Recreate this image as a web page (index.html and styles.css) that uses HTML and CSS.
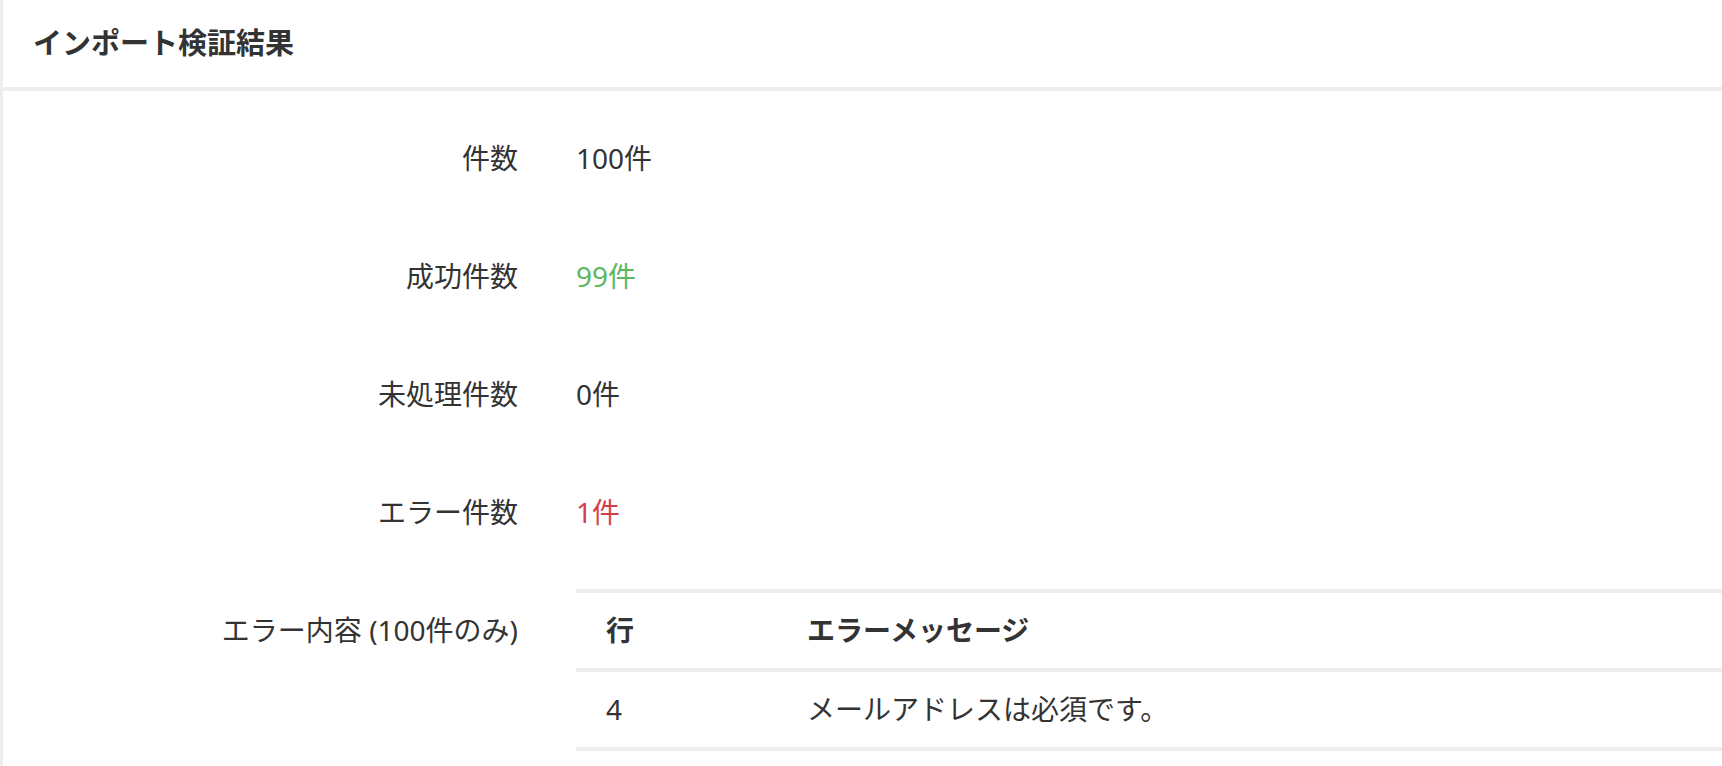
FILE: index.html
```html
<!DOCTYPE html>
<html lang="ja">
  <head>
    <meta charset="UTF-8" />
    <title>インポート検証結果</title>
    <link rel="stylesheet" href="styles.css">
  </head>
  <body>
    <!-- 検証結果パネル -->
    <div class="panel">
      <div class="panel-heading">
        <h3 class="panel-title">インポート検証結果</h3>
      </div>
      <div class="panel-body">
        <dl class="result">
          <div class="result-row">
            <dt>件数</dt>
            <dd>100件</dd>
          </div>
          <div class="result-row">
            <dt>成功件数</dt>
            <dd class="text-success">99件</dd>
          </div>
          <div class="result-row">
            <dt>未処理件数</dt>
            <dd>0件</dd>
          </div>
          <div class="result-row">
            <dt>エラー件数</dt>
            <dd class="text-danger">1件</dd>
          </div>
          <div class="result-row result-row-table">
            <dt>エラー内容 (100件のみ)</dt>
            <dd>
              <table class="error-table">
                <thead>
                  <tr>
                    <th class="col-line">行</th>
                    <th>エラーメッセージ</th>
                  </tr>
                </thead>
                <tbody>
                  <tr>
                    <td>4</td>
                    <td>メールアドレスは必須です。</td>
                  </tr>
                </tbody>
              </table>
            </dd>
          </div>
        </dl>
      </div>
    </div>
  </body>
</html>
```

FILE: styles.css
```css
/* インポート検証結果 */
body {
  margin: 0;
  font-family: "Noto Sans", "Noto Sans CJK JP", sans-serif;
  font-size: 28px;
  line-height: 42px;
  color: #333;
  background: #fff;
}
.panel {
  border-left: 3px solid #eee;
  min-height: 100vh;
  box-sizing: border-box;
}
.panel-heading {
  padding: 22px 30px 23px;
  border-bottom: 4px solid #eee;
}
.panel-title {
  margin: 0;
  font-size: 29px;
  line-height: 42px;
  font-weight: bold;
}
.panel-body {
  padding-top: 26px;
}
.result {
  margin: 0;
}
.result-row {
  display: flex;
  margin-bottom: 56px;
}
.result dt {
  flex: none;
  width: 515px;
  padding-top: 20px;
  text-align: right;
}
.result dd {
  flex: 1;
  margin: 0 0 0 58px;
  padding-top: 20px;
}
.result-row-table {
  margin-top: 3px;
}
.result-row-table dd {
  padding-top: 0;
}
.text-success {
  color: #5cb85c;
}
.text-danger {
  color: #d43f47;
}
.error-table {
  width: 100%;
  border-collapse: collapse;
  table-layout: fixed;
  border-top: 4px solid #eee;
}
.error-table th,
.error-table td {
  text-align: left;
  padding: 16px 0 17px 30px;
  border-bottom: 4px solid #eee;
}
.error-table th {
  font-weight: bold;
}
.error-table .col-line {
  width: 171px;
}
```
